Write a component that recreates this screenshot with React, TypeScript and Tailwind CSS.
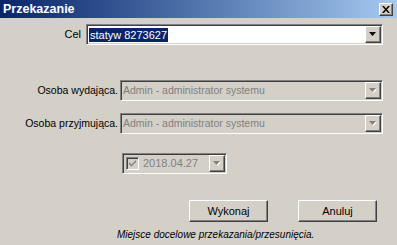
import React from 'react';

const sunken =
  'border border-t-[#808080] border-l-[#808080] border-b-white border-r-white shadow-[inset_1px_1px_0_#404040,inset_-1px_-1px_0_#d4d0c8]';
const raised =
  'border border-t-white border-l-white border-b-[#404040] border-r-[#404040] shadow-[inset_-1px_-1px_0_#808080,inset_1px_1px_0_#d4d0c8]';

function Arrow({ disabled }: { disabled?: boolean }) {
  return (
    <svg width="8" height="5" viewBox="0 0 8 5">
      {disabled && <path d="M1 1h7L4.5 5z" fill="#ffffff" />}
      <path d="M0 0h7L3.5 4z" fill={disabled ? '#808080' : '#000000'} />
    </svg>
  );
}

function DropButton({ disabled }: { disabled?: boolean }) {
  return (
    <div className={`${raised} w-[16px] h-[17px] bg-[#d4d0c8] flex items-center justify-center`}>
      <Arrow disabled={disabled} />
    </div>
  );
}

function Combo({ value, disabled, width }: { value: string; disabled?: boolean; width: string }) {
  return (
    <div
      className={`${sunken} ${width} h-[21px] flex items-center justify-between pl-[2px] pr-[1px] ${
        disabled ? 'bg-[#d4d0c8]' : 'bg-white'
      }`}
    >
      {disabled ? (
        <span className="text-[#808080]">{value}</span>
      ) : (
        <span className="bg-[#0a246a] text-white px-[1px] leading-[14px]">{value}</span>
      )}
      <DropButton disabled={disabled} />
    </div>
  );
}

export default function App() {
  return (
    <div
      className="w-[397px] h-[245px] bg-[#d4d0c8] text-[10.5px] text-black flex flex-col overflow-hidden"
      style={{ fontFamily: '"Liberation Sans", Arial, sans-serif' }}
    >
      <div className="h-[18px] bg-gradient-to-r from-[#0a246a] to-[#a6caf0] flex items-center justify-between pl-[3px] pr-[4px]">
        <span className="text-white font-bold text-[12.5px]">Przekazanie</span>
        <div className={`${raised} w-[14px] h-[13px] bg-[#d4d0c8] flex items-center justify-center`}>
          <svg width="8" height="7" viewBox="0 0 8 7">
            <path d="M0 0h2l2 2.5L6 0h2L5 3.5 8 7H6L4 4.5 2 7H0l3-3.5z" fill="#000" />
          </svg>
        </div>
      </div>

      <div className="flex items-center mt-[6px]">
        <div className="w-[82px] text-right pr-[1px] text-[11px]">Cel</div>
        <div className="ml-[4px] text-[11px]">
          <Combo value="statyw 8273627" width="w-[297px]" />
        </div>
      </div>

      <div className="flex items-center mt-[35px]">
        <div className="w-[118px] text-right">Osoba wydająca.</div>
        <div className="ml-[2px]">
          <Combo value="Admin - administrator systemu" disabled width="w-[263px]" />
        </div>
      </div>

      <div className="flex items-center mt-[12px]">
        <div className="w-[118px] text-right">Osoba przyjmująca.</div>
        <div className="ml-[2px]">
          <Combo value="Admin - administrator systemu" disabled width="w-[263px]" />
        </div>
      </div>

      <div className="flex mt-[19px] pl-[122px]">
        <div className={`${sunken} w-[105px] h-[21px] flex items-center justify-between pl-[3px] pr-[1px]`}>
          <div className="flex items-center gap-[4px]">
            <div className={`${sunken} w-[13px] h-[13px] flex items-center justify-center`}>
              <svg width="7" height="7" viewBox="0 0 7 7">
                <path d="M0 2l2.5 2.5L7 0v2L2.5 6.5 0 4z" fill="#808080" />
              </svg>
            </div>
            <span className="text-[#808080] text-[11px]">2018.04.27</span>
          </div>
          <DropButton disabled />
        </div>
      </div>

      <div className="flex mt-[26px] pl-[189px] gap-[30px]">
        <button className={`${raised} w-[79px] h-[22px] bg-[#d4d0c8] text-[11px] font-normal`}>Wykonaj</button>
        <button className={`${raised} w-[79px] h-[22px] bg-[#d4d0c8] text-[11px] font-normal`}>Anuluj</button>
      </div>

      <div className="mt-[5px] pl-[117px] italic text-[10px]">Miejsce docelowe przekazania/przesunięcia.</div>
    </div>
  );
}
